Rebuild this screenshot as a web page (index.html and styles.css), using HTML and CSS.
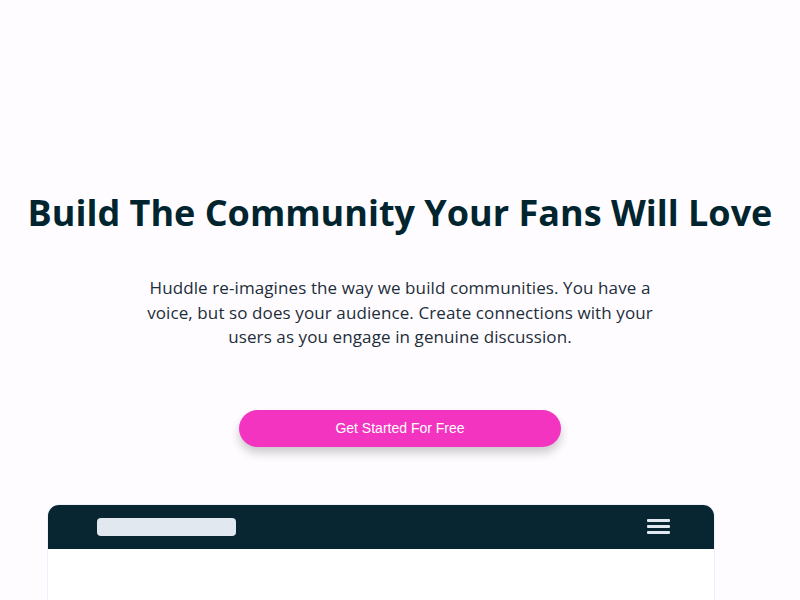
FILE: index.html
```html
<!DOCTYPE html>
<html lang="en">
<head>
    <meta charset="UTF-8">
    <meta name="viewport" content="width=device-width, initial-scale=1.0">
    <title>Huddle</title>
    <link rel="stylesheet" href="styles.css">
</head>
<body>
    <main class="hero">
        <h1 class="hero-title">Build The Community Your Fans Will Love</h1>

        <p class="hero-text">
            Huddle re-imagines the way we build communities. You have a
            voice, but so does your audience. Create connections with your
            users as you engage in genuine discussion.
        </p>

        <a href="#" class="cta">Get Started For Free</a>

        <!-- mockup of the app -->
        <div class="mockup">
            <div class="mockup-bar">
                <span class="mockup-search"></span>
                <span class="mockup-menu">
                    <span></span>
                    <span></span>
                    <span></span>
                </span>
            </div>
            <div class="mockup-body"></div>
        </div>
    </main>
</body>
</html>
```

FILE: styles.css
```css
body {
    margin: 0;
    background-color: #fffcff;
    color: #00252e;
    font-family: 'Open Sans', sans-serif;
    overflow: hidden;
}

.hero {
    display: flex;
    flex-direction: column;
    align-items: center;
    padding-top: 190px;
}

.hero-title {
    margin: 0;
    font-size: 36px;
    font-weight: 700;
    line-height: 46px;
    white-space: nowrap;
}

.hero-text {
    margin: 40px 0 0;
    max-width: 520px;
    font-size: 17px;
    font-weight: 400;
    letter-spacing: 0.1px;
    line-height: 24.5px;
    text-align: center;
    color: #1c2e3a;
}

.cta {
    display: block;
    margin-top: 60px;
    width: 322px;
    height: 37px;
    line-height: 37px;
    border-radius: 20px;
    background-color: #f234c0;
    color: #ffffff;
    font-family: 'Liberation Sans', Arial, sans-serif;
    font-size: 14px;
    text-align: center;
    text-decoration: none;
    box-shadow: 0 6px 10px rgba(0, 0, 0, 0.2);
}

.mockup {
    margin-top: 57px;
    margin-right: 38px;
    width: 666px;
    border: 1px solid #eef1fb;
    border-radius: 12px 12px 0 0;
    overflow: hidden;
}

.mockup-bar {
    display: flex;
    align-items: center;
    justify-content: space-between;
    height: 44px;
    padding: 0 44px 0 49px;
    background-color: #082631;
}

.mockup-search {
    width: 139px;
    height: 18px;
    border-radius: 4px;
    background-color: #e2e8f0;
}

.mockup-menu {
    display: flex;
    flex-direction: column;
    gap: 3px;
    width: 23px;
}

.mockup-menu span {
    height: 3px;
    border-radius: 1px;
    background-color: #e2e8f0;
}

.mockup-body {
    height: 80px;
    background-color: #ffffff;
}
```
